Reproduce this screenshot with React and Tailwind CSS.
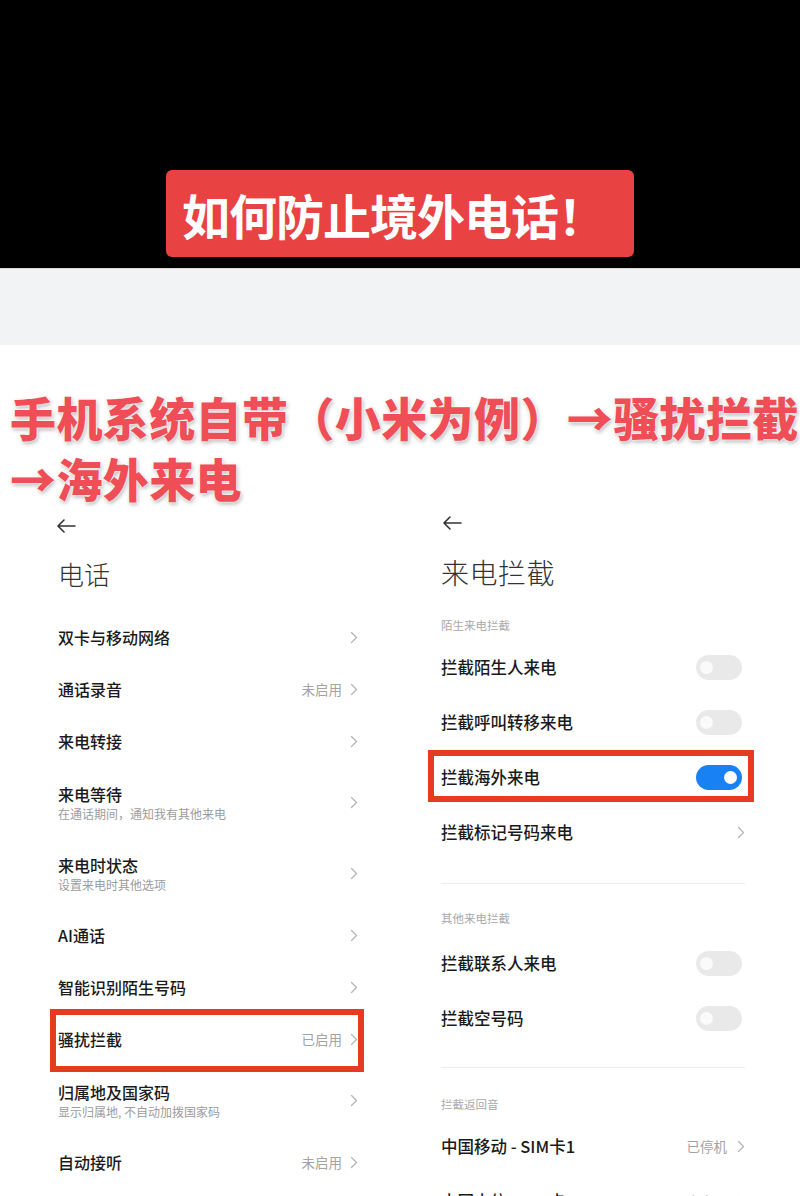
import React from "react";

const FONT = { fontFamily: '"Noto Sans CJK SC", "Noto Sans", sans-serif' };

function Chevron() {
  return (
    <svg width="8" height="13" viewBox="0 0 8 13" className="shrink-0">
      <path d="M1.5 1.5 L6.5 6.5 L1.5 11.5" stroke="#b5b5b5" strokeWidth="1.3" fill="none" strokeLinecap="round" strokeLinejoin="round" />
    </svg>
  );
}

function BackArrow() {
  return (
    <svg width="20" height="16" viewBox="0 0 20 16">
      <path d="M19 8 H2 M8 2 L2 8 L8 14" stroke="#333" strokeWidth="1.6" fill="none" strokeLinecap="round" strokeLinejoin="round" />
    </svg>
  );
}

function Toggle({ on }) {
  return on ? (
    <div className="mr-[3px] flex h-[25px] w-[46px] items-center justify-end rounded-full bg-[#1882f4] pr-[5px]">
      <div className="h-[13px] w-[13px] rounded-full bg-white" />
    </div>
  ) : (
    <div className="mr-[3px] flex h-[25px] w-[46px] items-center rounded-full bg-[#e9e9e9] pl-[4px]">
      <div className="h-[13px] w-[13px] rounded-full bg-[#fafafa]" />
    </div>
  );
}

function LRow({ title, sub, value, boxed }) {
  return (
    <div className={sub ? "relative flex h-[71px] items-center justify-between" : "relative flex h-[52px] items-center justify-between"}>
      <div className="flex flex-col">
        <div className="text-[16px] leading-[22px] font-medium text-[#1a1a1a]">{title}</div>
        {sub && <div className="mt-[1px] text-[12px] leading-[16px] text-[#9c9c9c]">{sub}</div>}
      </div>
      <div className="flex items-center">
        {value && <span className="mr-[8px] text-[13.5px] text-[#a3a3a3]">{value}</span>}
        <Chevron />
      </div>
      {boxed && <div className="absolute -top-[4px] -bottom-[7px] -left-[8px] -right-[6px] border-[6px] border-[#e63b22]" />}
    </div>
  );
}

function RRow({ title, toggle, on, chevron, value, boxed }) {
  return (
    <div className="relative flex h-[55px] items-center justify-between">
      <div className="text-[16.5px] font-medium text-[#1a1a1a]">{title}</div>
      {toggle && <Toggle on={on} />}
      {chevron && (
        <div className="flex items-center">
          {value && <span className="mr-[10px] text-[13.5px] text-[#a3a3a3]">{value}</span>}
          <Chevron />
        </div>
      )}
      {boxed && <div className="absolute top-0 bottom-[3px] -left-[13px] -right-[9px] border-[6px] border-[#e63b22]" />}
    </div>
  );
}

function Label({ children }) {
  return <div className="text-[11.5px] leading-[16px] text-[#a8a8a8]">{children}</div>;
}

export default function App() {
  return (
    <div style={FONT} className="h-[1196px] w-[800px] overflow-hidden bg-white">
      {/* top black banner */}
      <div className="flex h-[268px] flex-col bg-black pt-[170px] pl-[166px]">
        <div className="flex h-[87px] w-[468px] items-center rounded-[6px] bg-[#e84243] pl-[16px]">
          <span className="text-[48px] leading-none font-bold tracking-[-1px] text-white">如何防止境外电话！</span>
        </div>
      </div>
      <div className="h-[77px] border-t border-[#d8d8d8] bg-[#f2f3f5]" />

      {/* red heading */}
      <div className="pt-[41px] pl-[10px]">
        <div className="text-[46px] leading-[61px] font-black whitespace-nowrap tracking-[0.4px] text-[#ef4e57] [text-shadow:0_0_2px_#fff,0_0_3px_#fff,1px_2px_4px_rgba(0,0,0,0.35)]">
          手机系统自带（小米为例）→骚扰拦截
          <br />
          →海外来电
        </div>
      </div>

      {/* two phone panels */}
      <div className="grid grid-cols-2">
        {/* left */}
        <div className="pl-[58px] pr-[42px]">
          <div className="-ml-[2px] flex h-[36px] items-center">
            <BackArrow />
          </div>
          <div className="mb-[9px] flex h-[58px] items-center">
            <span className="text-[26px] font-light text-[#333]">电话</span>
          </div>
          <LRow title="双卡与移动网络" />
          <LRow title="通话录音" value="未启用" />
          <LRow title="来电转接" />
          <LRow title="来电等待" sub="在通话期间，通知我有其他来电" />
          <LRow title="来电时状态" sub="设置来电时其他选项" />
          <LRow title="AI通话" />
          <LRow title="智能识别陌生号码" />
          <LRow title="骚扰拦截" value="已启用" boxed />
          <LRow title="归属地及国家码" sub="显示归属地, 不自动加拨国家码" />
          <LRow title="自动接听" value="未启用" />
        </div>

        {/* right */}
        <div className="pl-[41px] pr-[55px]">
          <div className="flex h-[30px] items-center pl-[1px]">
            <BackArrow />
          </div>
          <div className="flex h-[68px] items-center">
            <span className="text-[28px] font-light tracking-[0.5px] text-[#333]">来电拦截</span>
          </div>
          <div className="h-[34px] pt-[11px]">
            <Label>陌生来电拦截</Label>
          </div>
          <RRow title="拦截陌生人来电" toggle />
          <RRow title="拦截呼叫转移来电" toggle />
          <RRow title="拦截海外来电" toggle on boxed />
          <RRow title="拦截标记号码来电" chevron />
          <div className="mt-[23px] h-px bg-[#ececec]" />
          <div className="h-[52px] pt-[26px]">
            <Label>其他来电拦截</Label>
          </div>
          <RRow title="拦截联系人来电" toggle />
          <RRow title="拦截空号码" toggle />
          <div className="mt-[21px] h-px bg-[#ececec]" />
          <div className="h-[51px] pt-[28px]">
            <Label>拦截返回音</Label>
          </div>
          <RRow title="中国移动 - SIM卡1" chevron value="已停机" />
          <RRow title="中国电信 - SIM卡2" chevron value="未启用" />
        </div>
      </div>
    </div>
  );
}
